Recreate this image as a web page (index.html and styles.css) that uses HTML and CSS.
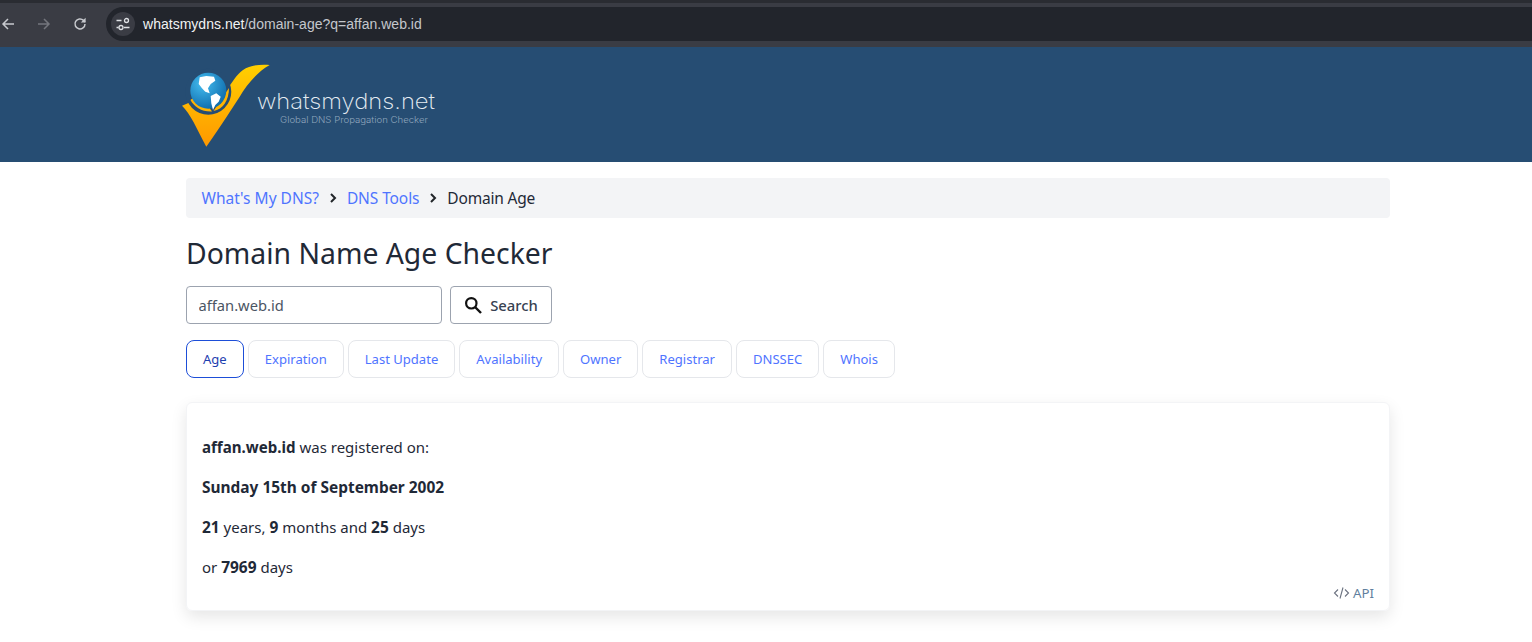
FILE: index.html
```html
<!DOCTYPE html>
<html lang="en">
<head>
<meta charset="utf-8">
<title>Domain Name Age Checker</title>
<link rel="stylesheet" href="styles.css">
</head>
<body>
<div class="chrome">
  <div class="chrome-top"></div>
  <div class="toolbar">
    <svg class="nav-icon back" width="16" height="16" viewBox="0 0 16 16"><path d="M14 8H3M8 3 3 8l5 5" fill="none" stroke="#c7c9ce" stroke-width="1.5"/></svg>
    <svg class="nav-icon fwd" width="16" height="16" viewBox="0 0 16 16"><path d="M2 8h11M8 3l5 5-5 5" fill="none" stroke="#74767d" stroke-width="1.5"/></svg>
    <svg class="nav-icon reload" width="16" height="16" viewBox="0 0 16 16"><path d="M13 8a5 5 0 1 1-1.5-3.6L13 6" fill="none" stroke="#c7c9ce" stroke-width="1.5"/><path d="M13.6 1.8v4.8H8.8z" fill="#c7c9ce"/></svg>
    <div class="omnibox">
      <span class="site-info">
        <svg width="16" height="14" viewBox="0 0 16 14"><path d="M1.5 3.500h5M9 10.500h5.500M1.500 10.500h2" fill="none" stroke="#dfe1e5" stroke-width="1.500"/><circle cx="11.500" cy="3.500" r="2" fill="none" stroke="#dfe1e5" stroke-width="1.300"/><circle cx="6" cy="10.500" r="2" fill="none" stroke="#dfe1e5" stroke-width="1.300"/></svg>
      </span>
      <span class="url"><span class="url-host">whatsmydns.net</span>/domain-age?q=affan.web.id</span>
    </div>
  </div>
</div>

<header class="site-header">
  <svg class="logo" width="262" height="92" viewBox="0 0 262 92">
    <defs>
      <linearGradient id="check" x1="0" y1="0" x2="0" y2="1"><stop offset="0" stop-color="#ffd000"/><stop offset="1" stop-color="#ff9800"/></linearGradient>
      <radialGradient id="globe" cx=".35" cy=".3" r=".8"><stop offset="0" stop-color="#45bdf0"/><stop offset="1" stop-color="#0a66a8"/></radialGradient>
    </defs>
    <path d="M87.700 2C80 1 68 2 61 7C54 12 50 20 46 25L30 35L9.300 38.700L0 42.700C8 50 15 66 24.300 83.700C34 70 46 52 57.700 33.700C64 23 75 9 87.700 2Z" fill="url(#check)"/>
    <circle cx="26.300" cy="28.700" r="23" fill="#264d73"/>
    <path d="M8.500 37C13 33 19 36 24 40L30 48.500C20 49 12 44 8.500 37Z" fill="#ffb300"/>
    <path d="M31.500 48C41 46.500 47 37 47 25L40 35Z" fill="#ffb300"/>
    <circle cx="26.300" cy="27.700" r="18" fill="url(#globe)"/>
    <path d="M17.700 14.300L24.300 13L32 13.700L33.300 17.700L28.700 21L26 25.300L27.700 30.300L23.300 28.700L20 25.300L16.700 21Z" fill="#fff"/>
    <path d="M28.700 33L34.300 30.300L38.700 33.700L36.700 38.700L33.300 42L31 47L29.300 40.300Z" fill="#fff"/>
    <text class="logo-name" x="75" y="45.500" textLength="178" lengthAdjust="spacingAndGlyphs">whatsmydns.net</text>
    <text class="logo-tag" x="98" y="60" textLength="148" lengthAdjust="spacingAndGlyphs">Global DNS Propagation Checker</text>
  </svg>
</header>

<main class="page">
  <nav class="breadcrumb">
    <a href="#">What's My DNS?</a>
    <svg class="chev" width="10" height="12" viewBox="0 0 10 12"><path d="M3 2l4 4-4 4" fill="none" stroke="#212529" stroke-width="2"/></svg>
    <a class="crumb-tools" href="#">DNS Tools</a>
    <svg class="chev" width="10" height="12" viewBox="0 0 10 12"><path d="M3 2l4 4-4 4" fill="none" stroke="#212529" stroke-width="2"/></svg>
    <span class="crumb-current">Domain Age</span>
  </nav>

  <h1 class="title">Domain Name Age Checker</h1>

  <form class="search">
    <input class="search-input" type="text" value="affan.web.id">
    <button class="search-btn" type="button">
      <svg width="18" height="18" viewBox="0 0 18 18"><circle cx="7.300" cy="7.300" r="5.200" fill="none" stroke="#111" stroke-width="2.200"/><path d="M11 11l6 6" stroke="#111" stroke-width="2.400" fill="none"/></svg>
      Search
    </button>
  </form>

  <div class="tabs">
    <a class="tab active" href="#">Age</a>
    <a class="tab" href="#">Expiration</a>
    <a class="tab" href="#">Last Update</a>
    <a class="tab" href="#">Availability</a>
    <a class="tab" href="#">Owner</a>
    <a class="tab" href="#">Registrar</a>
    <a class="tab" href="#">DNSSEC</a>
    <a class="tab" href="#">Whois</a>
  </div>

  <section class="card">
    <p><b class="domain">affan.web.id</b> was registered on:</p>
    <p><b>Sunday 15th of September 2002</b></p>
    <p><b>21</b> years, <b>9</b> months and <b>25</b> days</p>
    <p>or <b>7969</b> days</p>
    <a class="api" href="#"><svg width="17" height="14" viewBox="0 0 17 14"><path d="M5 3.500 1.500 7 5 10.500M12 3.500 15.500 7 12 10.500M10 1.500 7 12.500" fill="none" stroke="#6b7280" stroke-width="1.100"/></svg>API</a>
  </section>
</main>
</body>
</html>
```
FILE: styles.css
```css
* { box-sizing: border-box; }
html, body { margin: 0; padding: 0; }
body {
  background: #fff;
  color: #1f2937;
  font-family: "Noto Sans", "Open Sans", sans-serif;
  font-size: 15px;
  overflow: hidden;
  height: 642px;
}
.chrome { height: 47px; background: #3a3c44; }
.chrome-top { height: 3px; background: #2a2c32; }
.toolbar { display: flex; align-items: center; height: 41px; }
.nav-icon { flex: none; }
.fwd { margin-left: 20px; }
.reload { margin-left: 20px; }
.omnibox {
  flex: 1;
  display: flex;
  align-items: center;
  height: 34px;
  margin-left: 18px;
  border-radius: 17px 0 0 17px;
  background: #22252c;
  padding-left: 5px;
}
.site-info {
  width: 24px; height: 24px;
  border-radius: 50%;
  background: #3a3c44;
  display: flex; align-items: center; justify-content: center;
}
.url {
  margin-left: 8px;
  font-family: "Liberation Sans", sans-serif;
  font-size: 14px;
  letter-spacing: .02px;
  color: #c4c7cc;
}
.url-host { color: #f1f3f4; }

.site-header { height: 115px; background: #264d73; padding: 16px 0 0 182px; }
.logo { display: block; }
.logo-name { font-family: "Inter", sans-serif; font-weight: 200; font-size: 22px; fill: #e6edf3; }
.logo-tag { font-family: "Inter", sans-serif; font-weight: 300; font-size: 9px; fill: #8fa6bd; }

.page { width: 1204px; margin-left: 186px; padding-top: 16px; }
.breadcrumb {
  display: flex;
  align-items: center;
  height: 40px;
  padding: 0 16px 0 15.500px;
  gap: 9px;
  background: #f3f4f6;
  border-radius: 4px;
  font-size: 15.500px;
}
.breadcrumb a { color: #4f74ff; text-decoration: none; }
.crumb-tools { letter-spacing: -.1px; }
.crumb-current { letter-spacing: -.2px; }
.title { margin: 17px 0 0; font-size: 28.350px; line-height: 36px; font-weight: 400; color: #1f2937; }
.search { display: flex; gap: 8px; margin-top: 15px; }
.search-input {
  width: 256px; height: 38px;
  padding: 0 12px 0 11.500px;
  border: 1px solid #9ca3af;
  border-radius: 4px;
  font: inherit;
  font-size: 14.700px;
  color: #4b5563;
}
.search-btn {
  display: flex; align-items: center; justify-content: center;
  gap: 8px;
  width: 102px; height: 38px;
  padding: 0;
  background: #fff;
  border: 1px solid #9ca3af;
  border-radius: 4px;
  font: inherit;
  font-size: 14.800px;
  font-weight: 500;
  color: #374151;
}
.tabs { display: flex; gap: 4px; margin-top: 16px; }
.tab {
  display: flex; align-items: center;
  height: 38px;
  padding: 0 16px;
  border: 1px solid #e5e7eb;
  border-radius: 8px;
  font-size: 13.050px;
  color: #4f74ff;
  text-decoration: none;
}
.tab.active { border-color: #1d4ed8; color: #1e40af; }
.card {
  position: relative;
  height: 209px;
  margin-top: 24px;
  padding: 24px 15px 0;
  border: 1px solid #f3f4f6;
  border-radius: 6px;
  box-shadow: 0 6px 16px rgba(0,0,0,.1);
}
.card p { margin: 0; height: 40px; line-height: 40px; font-size: 15px; color: #1f2937; }
.card p b { font-weight: 700; font-size: 15.450px; }
.card p b.domain { font-size: 15.100px; }
.api {
  position: absolute;
  right: 15px; bottom: 8px;
  display: flex; align-items: center; gap: 3px;
  font-size: 13.300px;
  color: #5f7f9e;
  text-decoration: none;
}
```
